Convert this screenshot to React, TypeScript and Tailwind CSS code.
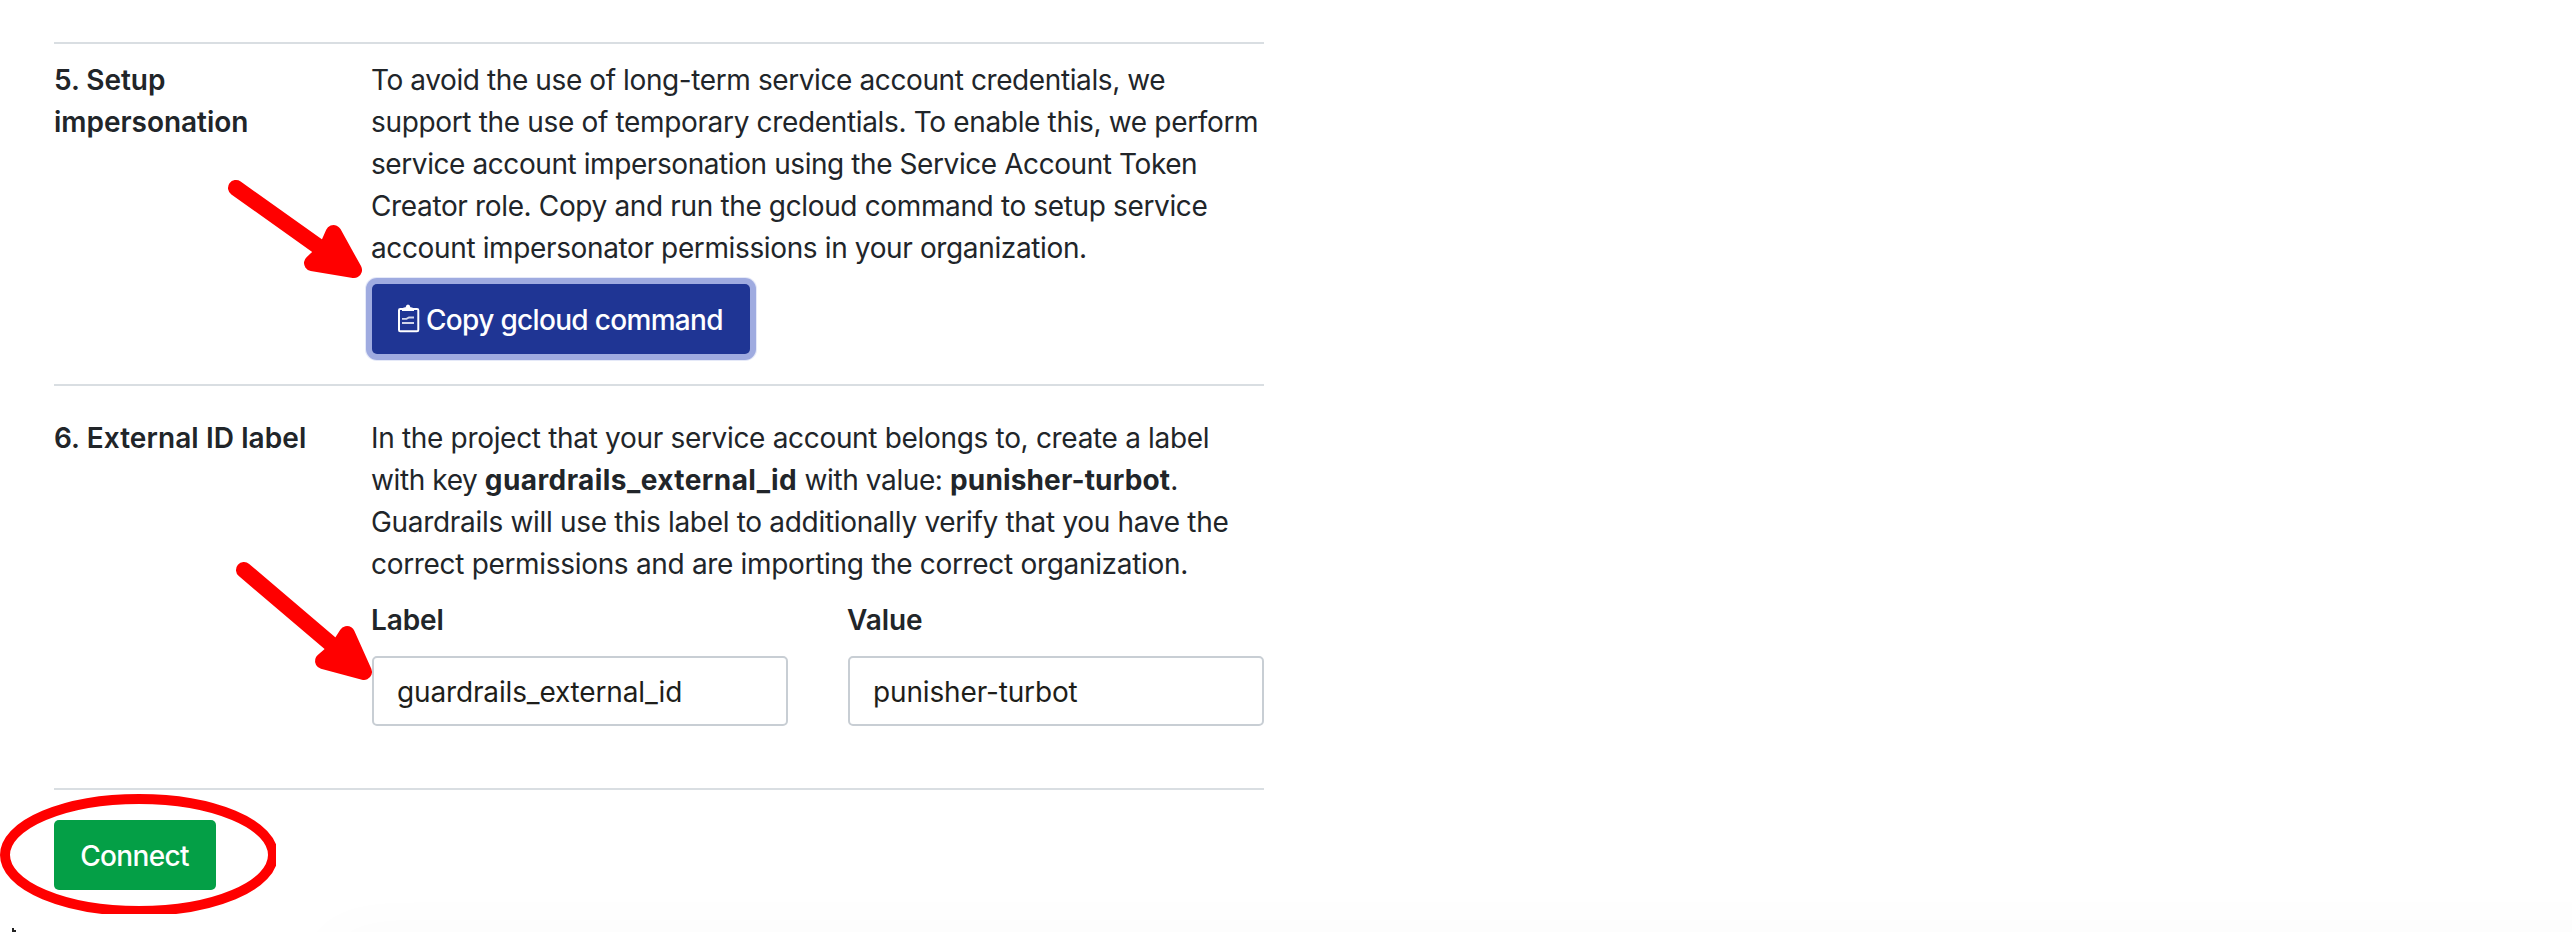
import React from "react";

function Rule() {
  return <div className="h-0.5 w-[1210px] bg-[#d9dee2]" />;
}

function ClipboardIcon() {
  return (
    <svg className="h-[34px] w-[24px] shrink-0" viewBox="0 0 24 34" fill="none" stroke="#fff">
      <path d="M6 7H3.200Q2 7 2 8.200V28Q2 29.200 3.200 29.200H20Q21.300 29.200 21.300 28V8.200Q21.300 7 20 7H16" strokeWidth="2" />
      <path d="M5 9V7.200Q5 5.500 8.600 5.200Q9 2.500 11 2.500T13.400 5.200Q17 5.500 17 7.200V9Z" fill="#fff" stroke="none" />
      <path d="M5 16.800H9.500L12 15.500H17M5 21H17" strokeWidth="1.800" opacity="0.800" />
    </svg>
  );
}

function Field({ label, value }: { label: string; value: string }) {
  return (
    <div className="w-[416px]">
      <div className="-ml-px h-[42px] font-semibold tracking-[-0.1px]">{label}</div>
      <div className="mt-[15px] flex h-[70px] items-center rounded-[5px] border-2 border-[#c8ced4] pl-[23px] pt-[2px] tracking-[-0.15px] text-[#1e1e1a]">
        {value}
      </div>
    </div>
  );
}

export default function App() {
  return (
    <div className="relative h-[932px] w-[2572px] overflow-hidden bg-white pl-[54px] pt-[42px] font-['Inter',sans-serif] text-[28px] leading-[42px] text-[#212529]">
      <Rule />
      <section className="flex h-[340px] pt-[15px]">
        <h2 className="w-[317px] font-semibold tracking-[-0.03px]">
          5. Setup
          <br />
          impersonation
        </h2>
        <div className="whitespace-nowrap">
          <p>
            <span className="block tracking-[-0.4px]">To avoid the use of long-term service account credentials, we</span>
            <span className="block tracking-[-0.34px]">support the use of temporary credentials. To enable this, we perform</span>
            <span className="block tracking-[-0.42px]">service account impersonation using the Service Account Token</span>
            <span className="block tracking-[-0.36px]">Creator role. Copy and run the gcloud command to setup service</span>
            <span className="block tracking-[-0.37px]">account impersonator permissions in your organization.</span>
          </p>
          <button className="ml-px mt-[15px] flex h-[70px] w-[378px] items-center rounded-[5px] bg-[#1f3594] pl-[25px] font-medium text-white shadow-[0_0_0_6px_#9fabe0,0_0_0_7px_#e5e9f8]">
            <ClipboardIcon />
            <span className="ml-[5px] pt-[2px] tracking-[-0.68px]">Copy gcloud command</span>
          </button>
        </div>
      </section>
      <Rule />
      <section className="flex h-[402px] pt-[31px]">
        <h2 className="w-[317px] font-semibold tracking-[0.08px]">6. External ID label</h2>
        <div className="whitespace-nowrap">
          <p>
            <span className="block tracking-[-0.32px]">In the project that your service account belongs to, create a label</span>
            <span className="block tracking-[-0.4px]">
              with key <b className="font-bold tracking-[0.42px]">guardrails_external_id</b> with value:{" "}
              <b className="font-bold tracking-[0.15px]">punisher-turbot</b>.
            </span>
            <span className="block tracking-[-0.31px]">Guardrails will use this label to additionally verify that you have the</span>
            <span className="block tracking-[-0.32px]">correct permissions and are importing the correct organization.</span>
          </p>
          <div className="ml-px mt-[14px] flex gap-[60px]">
            <Field label="Label" value="guardrails_external_id" />
            <Field label="Value" value="punisher-turbot" />
          </div>
        </div>
      </section>
      <Rule />
      <button className="mt-[30px] flex h-[70px] w-[162px] items-center justify-center rounded-[5px] bg-[#049f46] pr-px pt-[2px] font-medium tracking-[-0.65px] text-white">
        Connect
      </button>

      <div className="pointer-events-none absolute left-[330px] top-[944px] h-[40px] w-[2330px] shadow-[0_0_70px_rgba(0,0,0,0.035)]" />
      <svg className="pointer-events-none absolute left-0 top-0 h-[932px] w-[400px]" viewBox="0 0 400 932">
        <defs>
          <clipPath id="ring">
            <rect x="0" y="794" width="276" height="120" />
          </clipPath>
        </defs>
        <g stroke="#f00" strokeWidth="16" strokeLinecap="round" strokeLinejoin="round" fill="#f00">
          <path d="M236 188L326 252" />
          <path d="M333.500 233L354 270L312 263L326 250Z" />
          <path d="M244 570L338 650" />
          <path d="M347 634L364 672L323 661L338 648Z" />
        </g>
        <ellipse cx="139" cy="855" rx="134" ry="56" fill="none" stroke="#f00" strokeWidth="10" clipPath="url(#ring)" />
        <path d="M12 928h2v2h2v2h-4z" fill="#222" />
      </svg>
    </div>
  );
}
